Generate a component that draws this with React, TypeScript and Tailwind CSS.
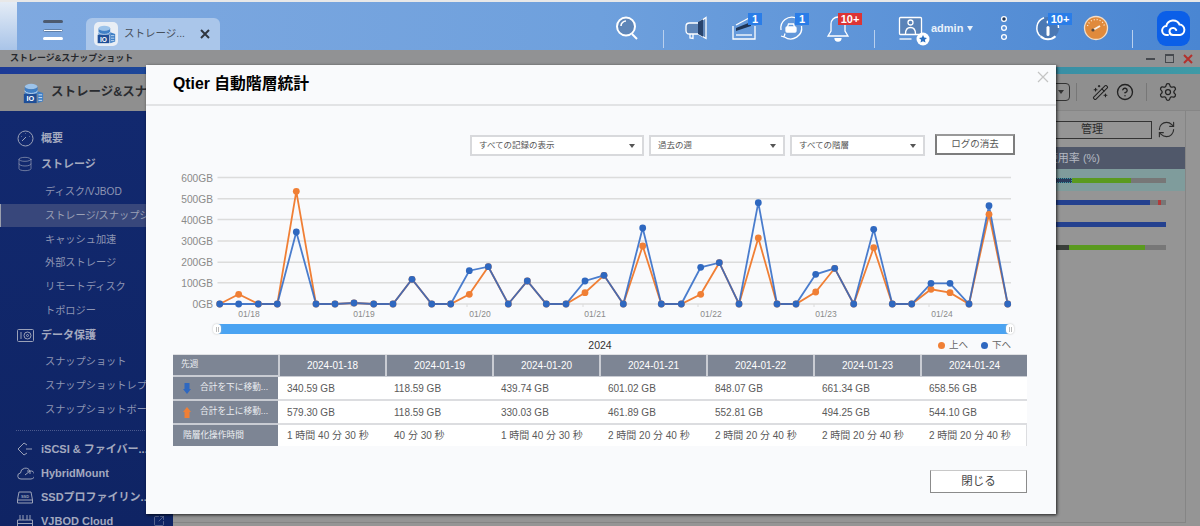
import React from 'react';
import { CircleHelp, Database, RefreshCw, Settings, SquareArrowOutUpRight, WandSparkles } from 'lucide-react';

const FONT = "[font-family:'Liberation_Sans','Noto_Sans_CJK_JP',sans-serif]";

// chart samples, one every ~19.2px, in page coordinates
const XS = [
  219.7, 238.7, 258.3, 277.3, 296.3, 316, 335, 354, 373.7, 393, 412, 431.7, 450.7, 469.3, 488.3, 508.3, 527.3, 546.3, 566, 585, 604,
  623.3, 642.7, 661.3, 681.3, 700.7, 719.3, 739, 758.3, 777, 796, 815.7, 834.7, 853.7, 873.7, 892.3, 911.7, 931, 950, 969, 989, 1007.7,
];
const DOWN = [
  304, 304, 304, 304, 232, 304, 304, 303, 304, 304, 279.3, 304, 304, 270.7, 266.7, 304, 281, 304, 304, 281, 275.3,
  304, 228, 304, 304, 267.3, 262.7, 304, 202.7, 304, 304, 274.3, 268.3, 304, 229.3, 304, 304, 283.3, 283.3, 304, 205.7, 304,
];
const UP = [
  304, 294.3, 304, 304, 191.3, 304, 304, 303, 304, 304, 279.3, 304, 304, 294.3, 266.7, 304, 281, 304, 304, 292.7, 275.3,
  304, 246, 304, 304, 294.3, 262.7, 304, 238, 304, 304, 292, 268.3, 304, 247.7, 304, 304, 289.3, 292.7, 304, 214.3, 304,
];
const GRID = [
  { y: 177.5, label: '600GB' },
  { y: 198.7, label: '500GB' },
  { y: 219.5, label: '400GB' },
  { y: 241, label: '300GB' },
  { y: 262.3, label: '200GB' },
  { y: 282.7, label: '100GB' },
  { y: 304, label: '0GB' },
];
const DATES = [
  { x: 249, tick: 236, label: '01/18' },
  { x: 364, tick: 351, label: '01/19' },
  { x: 480, tick: 467, label: '01/20' },
  { x: 595, tick: 583, label: '01/21' },
  { x: 711, tick: 698, label: '01/22' },
  { x: 826, tick: 814, label: '01/23' },
  { x: 942, tick: 929, label: '01/24' },
];

const COLUMNS = ['2024-01-18', '2024-01-19', '2024-01-20', '2024-01-21', '2024-01-22', '2024-01-23', '2024-01-24'];
const MOVED_DOWN = ['340.59 GB', '118.59 GB', '439.74 GB', '601.02 GB', '848.07 GB', '661.34 GB', '658.56 GB'];
const MOVED_UP = ['579.30 GB', '118.59 GB', '330.03 GB', '461.89 GB', '552.81 GB', '494.25 GB', '544.10 GB'];
const DURATION = ['1 時間 40 分 30 秒', '40 分 30 秒', '1 時間 40 分 30 秒', '2 時間 20 分 40 秒', '2 時間 20 分 40 秒', '2 時間 20 分 40 秒', '2 時間 20 分 40 秒'];

const points = (ys: number[]) => XS.map((x, i) => `${x},${ys[i]}`).join(' ');

const AppLogo = ({ size }: { size: number }) => (
  <svg className="shrink-0" width={size} height={size} viewBox="0 0 24 24">
    <ellipse cx="10" cy="5" rx="7" ry="3" fill="#9cc3ea" />
    <path d="M3 5v8h14V5a7 3 0 0 1-14 0z" fill="#3f7fc6" />
    <path d="M3 9.5a7 3 0 0 0 14 0" fill="none" stroke="#d6e6f6" strokeWidth="1" />
    <rect x="2" y="13" width="14" height="10" fill="#1f4f98" />
    <text x="9" y="21" textAnchor="middle" fontSize="8" fontWeight="700" fill="#fff" fontFamily="Liberation Sans">IO</text>
    <path d="M17 10l6 2v9l-6 2z" fill="#3f7fc6" />
    <path d="M18 14h4M18 17h4M18 20h4" stroke="#d6e6f6" strokeWidth="1" />
  </svg>
);

const Badge = ({ text, variant }: { text: string; variant?: 'red' | 'wide' }) => {
  const look =
    variant === 'red'
      ? 'left-[20px] w-[24px] bg-[#dd3434]'
      : variant === 'wide'
        ? 'left-[20px] w-[24px] bg-[#2a7de8]'
        : 'left-[24px] w-[14px] bg-[#2a7de8]';
  return <span className={`absolute top-[5px] flex h-[12px] items-center justify-center text-[11px] font-bold text-white ${look}`}>{text}</span>;
};

const Slot = ({ className, children }: { className?: string; children: React.ReactNode }) => (
  <div className={`relative h-[40px] w-[40px] shrink-0 ${className ?? ''}`}>{children}</div>
);

const Glyph = ({ children }: { children: React.ReactNode }) => (
  <svg width="40" height="40" viewBox="0 0 40 40" fill="none" stroke="#fff" strokeWidth="1.3">{children}</svg>
);

const Sep = ({ className }: { className: string }) => <div className={`mb-[2px] h-[18px] w-px shrink-0 self-end bg-[#b9d0ee] ${className}`} />;

const TopBar = () => (
  <header className="flex h-[50px] shrink-0 border-t-2 border-[#e8e8e8] bg-gradient-to-r from-[#7fa9e0] via-[#6ea0dd] to-[#4a86d2]">
    <div className="w-[17px] bg-gradient-to-b from-[#e4ecf6] to-[#a9c4e8]" />
    <div className="ml-[26px] mt-[18px] flex h-[20px] w-[20px] flex-col justify-between">
      <span className="h-[3px] rounded bg-[#4d5b70]" />
      <span className="h-[3px] rounded border border-[#5f7fa8] bg-white" />
      <span className="h-[3px] rounded bg-white" />
    </div>
    <div className="ml-[23px] mt-[16px] flex h-[32px] w-[134px] items-center rounded-t-[6px] bg-[#aac6ea] pl-[8px]">
      <div className="flex h-[24px] w-[24px] items-center justify-center rounded-[5px] bg-[#e9eef5]">
        <AppLogo size={20} />
      </div>
      <span className="ml-[6px] w-[60px] whitespace-nowrap text-[10.500px] text-[#47505c]">ストレージ...</span>
      <svg className="ml-[15px]" width="12" height="12" viewBox="0 0 12 12" stroke="#2f3640" strokeWidth="2">
        <path d="M2 2l8 8M10 2l-8 8" />
      </svg>
    </div>

    <div className="ml-auto flex items-center pr-[10px] pt-[4px]">
      <Slot>
        <Glyph>
          <circle cx="19" cy="18.500" r="9" fill="#5f86b8" strokeWidth="2" />
          <path d="M14 18a5 5 0 0 1 5-5" strokeWidth="1.600" />
          <path d="M25 26l5 5" strokeWidth="2" />
        </Glyph>
      </Slot>
      <Sep className="ml-[16px]" />
      <Slot className="ml-[12px]">
        <Glyph>
          <path d="M30 9.500v21l-8-4.500h-8.500c-2 0-3.500-1.500-3.500-3.500v-4c0-2 1.500-3.500 3.500-3.500H22z" fill="#5f86b8" />
          <path d="M22 14l5-2.800v17.600L22 26z" fill="#27426b" stroke="none" />
          <path d="M14 26v4l3 .5V26" />
        </Glyph>
      </Slot>
      <Slot className="ml-[8px]">
        <Glyph>
          <path d="M9 18v13h22V18" />
          <path d="M12 27h16" />
          <path d="M12 23l15-5v-4l-15 6z" fill="#1f3556" stroke="none" />
          <path d="M12 17l13-7" />
        </Glyph>
        <Badge text="1" />
      </Slot>
      <Slot className="ml-[7px]">
        <Glyph>
          <path d="M10 22a11 11 0 0 1 15-12M30.500 18a11 11 0 0 1-17 11" />
          <path d="M10 28l3 1 1-3.500" />
          <path d="M16.500 19l1-3h5l1 3" />
          <rect x="15" y="19" width="10" height="5" rx="1" fill="#fff" />
        </Glyph>
        <Badge text="1" />
      </Slot>
      <Slot className="ml-[7px]">
        <Glyph>
          <path d="M20 9a7 7 0 0 0-7 7v7l-3 5h20l-3-5v-7a7 7 0 0 0-7-7z" />
          <path d="M17 30a3 3 0 0 0 6 0" fill="#fff" />
        </Glyph>
        <Badge text="10+" variant="red" />
      </Slot>
      <Sep className="ml-[16px]" />
      <Slot className="ml-[15px]">
        <Glyph>
          <rect x="9.500" y="9.500" width="22" height="17" rx="1" fill="#5a83b8" />
          <circle cx="20.500" cy="14.500" r="2.500" />
          <path d="M15.500 26c0-5 2-6.500 5-6.500s5 1.500 5 6.500" />
          <path d="M9.500 31h12" />
          <circle cx="33" cy="31" r="6.500" fill="#fff" stroke="none" />
          <path d="M33 27l1.200 2.600 2.800.3-2.100 1.900.6 2.800-2.500-1.400-2.500 1.400.6-2.800-2.100-1.900 2.800-.3z" fill="#2a6fc0" stroke="none" />
        </Glyph>
      </Slot>
      <div className="flex h-[40px] w-[45px] shrink-0 items-center gap-[4px] pl-[1px]">
        <span className="text-[11px] font-bold text-[#e8f0fa]">admin</span>
        <span className="h-0 w-0 border-x-[3px] border-t-[5px] border-x-transparent border-t-[#e8f0fa]" />
      </div>
      <Slot className="ml-[9px]">
        <Glyph>
          <circle cx="20" cy="11" r="2.400" fill="#1f3556" />
          <circle cx="20" cy="20" r="2.400" />
          <circle cx="20" cy="29" r="2.400" />
        </Glyph>
      </Slot>
      <Slot className="ml-[4px]">
        <Glyph>
          <circle cx="20" cy="20" r="11" fill="#4a78b4" stroke="none" />
          <path d="M16 9.800a11 11 0 0 0-3.500 18.500" strokeWidth="1.500" />
          <path d="M12.500 28.300a11 11 0 0 0 15 0" strokeWidth="2" />
          <path d="M30.500 20a11 11 0 0 0-1-5" strokeWidth="1.500" />
          <rect x="18.500" y="18" width="3" height="10" rx="1.500" fill="#fff" stroke="none" />
          <circle cx="20" cy="14" r="1.500" fill="#fff" stroke="none" />
        </Glyph>
        <Badge text="10+" variant="wide" />
      </Slot>
      <Slot className="ml-[8px]">
        <Glyph>
          <circle cx="20" cy="20" r="11.500" fill="#e08a3c" stroke="#f3ddc6" />
          <path d="M11.500 18a8.800 8.800 0 0 1 17 0" strokeDasharray="1 2" stroke="#fbe8d4" />
          <path d="M17 22l7-4" stroke="#f8f0e6" strokeWidth="2" />
          <circle cx="17" cy="22" r="1.600" fill="#5a4a3c" stroke="none" />
        </Glyph>
      </Slot>
      <Sep className="ml-[16px]" />
      <div className="ml-[24px] flex h-[35px] w-[33px] shrink-0 items-center justify-center rounded-[9px] bg-[#0b5fe8]">
        <svg width="25" height="20" viewBox="0 0 25 20" fill="none" stroke="#fff" strokeWidth="2" strokeLinecap="round">
          <path d="M7 17H6a4.500 4.500 0 0 1-.7-9A7 7 0 0 1 18.500 6.500 5.300 5.300 0 0 1 19 17h-7a3.500 3.500 0 1 1 3.200-5" />
        </svg>
      </div>
    </div>
  </header>
);

const SubItem = ({ label, active }: { label: string; active?: boolean }) => (
  <div className={`flex h-[23.7px] items-center overflow-hidden whitespace-nowrap text-[10.200px] ${active ? 'border-l border-[#9a9fae] bg-[#38477b] pl-[44px] text-[#9aa0b6]' : 'pl-[45px] text-[#8d95b3]'}`}>
    {label}
  </div>
);

const GroupItem = ({ icon, label, className }: { icon: React.ReactNode; label: string; className?: string }) => (
  <div className={`flex items-center whitespace-nowrap text-[11px] font-bold text-[#a3a9bf] ${className ?? ''}`}>
    <span className="flex w-[41px] shrink-0 justify-center pl-[9px] text-[#9aa1b8]">{icon}</span>
    <span>{label}</span>
  </div>
);

const Sidebar = () => (
  <aside className="min-h-0 w-[173px] flex-1 overflow-hidden bg-gradient-to-b from-[#12296f] to-[#0f2464] pt-[14px]">
    <GroupItem
      className="h-[26px]"
      label="概要"
      icon={
        <svg width="17" height="17" viewBox="0 0 17 17" fill="none" stroke="currentColor" strokeWidth="1">
          <circle cx="8.5" cy="8.5" r="7.5" />
          <path d="M5 11l4-4M4 6.500h.5M8.500 3.500V4M13 6.500h-.5" />
        </svg>
      }
    />
    <GroupItem className="h-[26px]" label="ストレージ" icon={<Database size={16} strokeWidth={1} />} />
    <div className="mt-[3px]">
      <SubItem label="ディスク/VJBOD" />
      <SubItem label="ストレージ/スナップショット" active />
      <SubItem label="キャッシュ加速" />
      <SubItem label="外部ストレージ" />
      <SubItem label="リモートディスク" />
      <SubItem label="トポロジー" />
    </div>
    <GroupItem
      className="h-[26px]"
      label="データ保護"
      icon={
        <svg width="17" height="13" viewBox="0 0 17 13" fill="none" stroke="currentColor" strokeWidth="1">
          <rect x=".5" y=".5" width="16" height="12" rx="1" />
          <circle cx="10.5" cy="6.5" r="3.5" />
          <circle cx="10.5" cy="6.5" r="1" />
          <path d="M4 3v7" />
        </svg>
      }
    />
    <div className="mt-[2px]">
      <SubItem label="スナップショット" />
      <SubItem label="スナップショットレプリカ" />
      <SubItem label="スナップショットボールト" />
    </div>
    <div className="mx-[16px] mt-[9px] border-t border-dotted border-[#4b5a8e]" />
    <div className="mt-[6px]">
      <GroupItem
        className="h-[24px]"
        label="iSCSI & ファイバー..."
        icon={
          <svg width="16" height="14" viewBox="0 0 16 14" fill="none" stroke="currentColor" strokeWidth="1">
            <path d="M7 1L1 7l6 6M9 7h6" />
            <path d="M7 1l3 2M7 13l3-2" />
          </svg>
        }
      />
      <GroupItem
        className="h-[24px]"
        label="HybridMount"
        icon={
          <svg width="17" height="13" viewBox="0 0 17 13" fill="none" stroke="currentColor" strokeWidth="1">
            <path d="M4 12a3 3 0 0 1-.5-6A5 5 0 0 1 13 4a4 4 0 0 1 1 8z" />
            <path d="M8 8l5-4M10 4h3v3" />
          </svg>
        }
      />
      <GroupItem
        className="h-[24px]"
        label="SSDプロファイリン..."
        icon={
          <svg width="16" height="13" viewBox="0 0 16 13" fill="none" stroke="currentColor" strokeWidth="1">
            <path d="M2 1h12l1.500 8v3H.5V9z" />
            <path d="M1 9h14" />
            <text x="8" y="7" fontSize="4" textAnchor="middle" fill="currentColor" stroke="none">SSD</text>
          </svg>
        }
      />
      <div className="relative">
        <GroupItem
          className="h-[24px]"
          label="VJBOD Cloud"
          icon={
            <svg width="16" height="14" viewBox="0 0 16 14" fill="none" stroke="currentColor" strokeWidth="1">
              <path d="M3 1v5M6 1v5M10 6V1M13 6V1M.5 6h15v7H.5z" />
              <path d="M.5 9.500h15" />
            </svg>
          }
        />
        <SquareArrowOutUpRight size={12} strokeWidth={1} className="absolute right-[8px] top-[6px] text-[#9aa1b8]" />
      </div>
    </div>
  </aside>
);

const UsageBar = ({ children }: { children: React.ReactNode }) => (
  <div className="flex h-[5px] w-[129px] bg-[#777] [&>*]:h-full">{children}</div>
);

const UsageRow = ({ active, children }: { active?: boolean; children: React.ReactNode }) => (
  <div className={`flex h-[22.400px] items-center pl-[32px] ${active ? 'bg-[#7f9c9c]' : ''}`}>{children}</div>
);

// dimmed page that sits behind the dialog
const Backdrop = () => (
  <div className="flex min-w-0 flex-1 flex-col overflow-hidden bg-[#959595]">
    <div className="flex h-[37px] shrink-0 items-center justify-end border-b border-[#868686] bg-[#8f8f8f] pr-[22px] text-[#222]">
      <div className="mr-[6px] flex h-[18px] w-[30px] items-center justify-end rounded-[4px] border border-[#333] pr-[5px]">
        <span className="h-0 w-0 border-x-[3px] border-t-[4px] border-x-transparent border-t-[#333]" />
      </div>
      <div className="h-[18px] w-px bg-[#777]" />
      <WandSparkles size={17} strokeWidth={1.5} className="ml-[15px]" />
      <CircleHelp size={18} strokeWidth={1.8} className="ml-[7px]" />
      <div className="ml-[12px] h-[18px] w-px bg-[#777]" />
      <Settings size={20} strokeWidth={1.5} className="ml-[11px]" />
    </div>
    <div className="mb-[3px] mr-[14px] flex flex-1 flex-col items-end border-b border-r border-[#858585]">
      <div className="mt-[9px] flex items-center pr-[9px]">
        <div className="flex h-[18px] w-[120px] items-center justify-center border border-[#333] text-[11px] text-[#2c2c2c]">管理</div>
        <RefreshCw size={19} strokeWidth={1.4} className="ml-[5px] text-[#2c2c2c]" />
      </div>
      <div className="mt-[8px] w-[180px]">
        <div className="flex h-[22px] items-center justify-end bg-[#50586a] pr-[85px] text-[11px] text-[#b4b8c2]">使用率 (%)</div>
        <UsageRow active>
          <UsageBar>
            <span className="w-[35px] border border-dotted border-[#3e9aa5] bg-[#2a3a5a]" />
            <span className="w-[59px] bg-[#5a9a1f]" />
          </UsageBar>
        </UsageRow>
        <UsageRow>
          <UsageBar>
            <span className="w-[113px] bg-[#24418f]" />
            <span className="ml-[8px] w-[3px] bg-[#b13a3a]" />
          </UsageBar>
        </UsageRow>
        <UsageRow>
          <UsageBar>
            <span className="w-full bg-[#24418f]" />
          </UsageBar>
        </UsageRow>
        <UsageRow>
          <UsageBar>
            <span className="w-[32px] bg-[#3a3f3a]" />
            <span className="w-[76px] bg-[#5a9a1f]" />
          </UsageBar>
        </UsageRow>
      </div>
    </div>
  </div>
);

const Select = ({ label, className }: { label: string; className: string }) => (
  <div className={`flex h-[21px] items-center justify-between border-2 border-[#d8d9dc] bg-white px-[7px] text-[8.500px] text-[#555] ${className}`}>
    <span>{label}</span>
    <span className="h-0 w-0 border-x-[3px] border-t-[4px] border-x-transparent border-t-[#555]" />
  </div>
);

const Chart = () => (
  <svg className="block h-[150px] w-[854px]" viewBox="173 170 854 150">
    {GRID.map((g) => (
      <g key={g.label}>
        <line x1="217.500" x2="1011" y1={g.y} y2={g.y} stroke="#dcdcdc" strokeWidth="1.500" />
        <text x="213" y={g.y + 4} textAnchor="end" fontSize="10.200" fill="#8a8a8a" fontFamily="Liberation Sans">{g.label}</text>
      </g>
    ))}
    {DATES.map((d) => (
      <g key={d.label}>
        <line x1={d.tick} x2={d.tick} y1="304" y2="307" stroke="#dcdcdc" />
        <text x={d.x} y="317" textAnchor="middle" fontSize="8.500" fill="#8a8a8a" fontFamily="Liberation Sans">{d.label}</text>
      </g>
    ))}
    <polyline points={points(UP)} fill="none" stroke="#f07f35" strokeWidth="1.800" />
    <polyline points={points(DOWN)} fill="none" stroke="#2b66c4" strokeWidth="1.800" opacity="0.85" />
    {XS.map((x, i) => <circle key={i} cx={x} cy={UP[i]} r="3.400" fill="#f07f35" />)}
    {XS.map((x, i) => <circle key={i} cx={x} cy={DOWN[i]} r="3.400" fill="#2f68c0" />)}
  </svg>
);

const Handle = ({ className }: { className: string }) => (
  <span className={`absolute top-0 flex h-[10px] w-[8px] items-center justify-center rounded-full bg-white shadow-[0_0_2px_#bbb] ${className}`}>
    <span className="h-[5px] w-[3px] border-x border-[#bbb]" />
  </span>
);

const HeadLabel = ({ children, className }: { children: React.ReactNode; className?: string }) => (
  <div className={`flex items-center whitespace-nowrap bg-[#7d8594] text-[8.700px] text-[#eceef2] ${className ?? ''}`}>{children}</div>
);

const Arrow = ({ color, down }: { color: string; down?: boolean }) => (
  <svg className="ml-[10px] mr-[9px] shrink-0" width="8" height="11" viewBox="0 0 8 11" fill={color}>
    {down ? <path d="M1.500 0h5v6H8l-4 5-4-5h1.500z" /> : <path d="M4 0l4 5H6.500v6h-5V5H0z" />}
  </svg>
);

const ValueRow = ({ values }: { values: string[] }) => (
  <>
    {values.map((v, i) => (
      <div key={i} className="flex items-center whitespace-nowrap border-b-2 border-[#dcdde0] bg-white pl-[9px] text-[10px] text-[#5a5a5a]">{v}</div>
    ))}
  </>
);

const StatsTable = () => (
  <div className="grid h-[91px] grid-cols-[105px_repeat(7,1fr)] grid-rows-[22px_24px_24px_21px] border-t border-[#dfe0e3]">
    <HeadLabel className="border-b-2 border-[#c9ccd3] pl-[8px]">先週</HeadLabel>
    {COLUMNS.map((c) => (
      <div key={c} className="flex items-center justify-center border-b border-l-2 border-[#c9ccd3] bg-[#7d8594] text-[10px] text-white">{c}</div>
    ))}
    <HeadLabel className="border-b-2 border-[#c9ccd3]"><Arrow color="#2f68c0" down />合計を下に移動...</HeadLabel>
    <ValueRow values={MOVED_DOWN} />
    <HeadLabel className="border-b-2 border-[#c9ccd3]"><Arrow color="#f07f35" />合計を上に移動...</HeadLabel>
    <ValueRow values={MOVED_UP} />
    <HeadLabel className="pl-[10px]">階層化操作時間</HeadLabel>
    {DURATION.map((v, i) => (
      <div key={i} className={`flex items-center whitespace-nowrap bg-white pl-[9px] text-[10px] text-[#5a5a5a] ${i === 6 ? 'border-r border-[#dcdde0]' : ''}`}>{v}</div>
    ))}
  </div>
);

const Dialog = () => (
  <div className="absolute left-[146px] top-[65px] flex h-[449px] w-[910px] flex-col bg-[#f9fafc] shadow-[1px_1px_3px_rgba(0,0,0,0.8)]">
    <div className="relative flex h-[41px] shrink-0 items-center border-b-2 border-[#e2e3e5] pb-[2px] pl-[27px] text-[15.800px] font-bold text-black">
      Qtier 自動階層統計
      <svg className="absolute right-[7px] top-[6px]" width="12" height="12" viewBox="0 0 12 12" stroke="#c4c4c4" strokeWidth="1.200">
        <path d="M1 1l10 10M11 1L1 11" />
      </svg>
    </div>
    <div className="flex flex-1 flex-col pl-[27px] pr-[29px]">
      <div className="mt-[28px] flex h-[22px] shrink-0 items-end pl-[297px]">
        <Select className="w-[174px]" label="すべての記録の表示" />
        <Select className="ml-[5px] w-[136px]" label="過去の週" />
        <Select className="ml-[5px] w-[135px]" label="すべての階層" />
        <div className="mb-[1px] ml-[10px] flex h-[21px] w-[80px] items-center justify-center border-2 border-[#7d7d7d] border-t-[#999] bg-white text-[9.500px] text-[#555]">ログの消去</div>
      </div>
      <div className="mt-[14px]">
        <Chart />
      </div>
      <div className="relative ml-[43px] mt-[4px] h-[10px] w-[794px] bg-[#4aa3f2]">
        <Handle className="left-[-3px]" />
        <Handle className="right-[-4px]" />
      </div>
      <div className="relative flex h-[20px] items-center justify-center pt-[3px] text-[10.500px] text-[#333]">
        2024
        <div className="absolute right-[16px] top-[4px] flex items-center text-[9.500px] text-[#666]">
          <span className="h-[7px] w-[7px] rounded-full bg-[#f07f35]" />
          <span className="ml-[4px]">上へ</span>
          <span className="ml-[13px] h-[7px] w-[7px] rounded-full bg-[#2f68c0]" />
          <span className="ml-[4px]">下へ</span>
        </div>
      </div>
      <StatsTable />
      <button className="mt-[25px] flex h-[23px] w-[97px] shrink-0 items-center justify-center self-end border border-[#8b8b8b] border-t-[#c8c8c8] bg-white text-[11.500px] text-[#444]">閉じる</button>
    </div>
  </div>
);

const App: React.FC = () => {
  return (
    <div className={`relative flex h-[526px] w-[1200px] flex-col overflow-hidden bg-[#959595] ${FONT}`}>
      <TopBar />
      {/* window title */}
      <div className="flex h-[17px] shrink-0 items-center bg-[#919294] pl-[10px] pr-[7px]">
        <span className="text-[9px] font-bold text-[#26282c]">ストレージ&スナップショット</span>
        <span className="ml-auto h-[2px] w-[9px] bg-[#46494e]" />
        <span className="ml-[10px] h-[9px] w-[9px] border border-t-2 border-[#46494e]" />
        <svg className="ml-[9px]" width="10" height="10" viewBox="0 0 10 10" stroke="#b4302c" strokeWidth="2">
          <path d="M1 1l8 8M9 1L1 9" />
        </svg>
      </div>
      <div className="h-[7px] shrink-0 bg-gradient-to-r from-[#1c3a96] to-[#3f9aa6]" />
      <div className="flex min-h-0 flex-1">
        <div className="flex w-[173px] shrink-0 flex-col">
          <div className="flex h-[37px] shrink-0 items-center overflow-hidden whitespace-nowrap bg-[#8f8f8f] pl-[22px] text-[12.500px] font-bold text-[#2a2c30]">
            <AppLogo size={22} />
            <span className="ml-[7px]">ストレージ&スナップショット</span>
          </div>
          <Sidebar />
        </div>
        <Backdrop />
      </div>
      <Dialog />
    </div>
  );
};

export default App;
